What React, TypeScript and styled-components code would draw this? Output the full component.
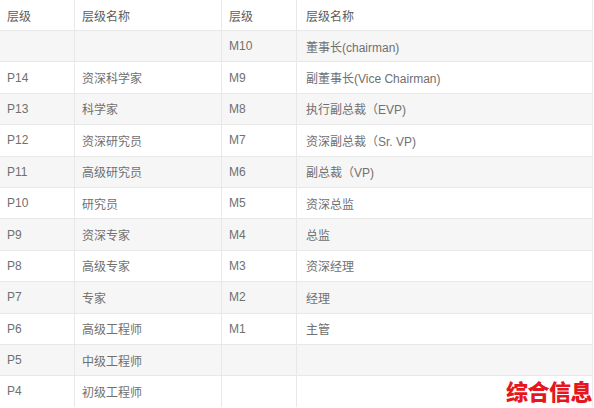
import React from "react"
import styled, { createGlobalStyle } from "styled-components"

const GlobalStyle = createGlobalStyle`
  html, body {
    margin: 0;
    padding: 0;
    background: #ffffff;
  }
  body {
    font-family: "Liberation Sans", "Noto Sans CJK SC", sans-serif;
  }
`

// 左边是专业序列，右边是管理序列
const rows: [string, string, string, string][] = [
  ["", "", "M10", "董事长(chairman)"],
  ["P14", "资深科学家", "M9", "副董事长(Vice Chairman)"],
  ["P13", "科学家", "M8", "执行副总裁（EVP)"],
  ["P12", "资深研究员", "M7", "资深副总裁（Sr. VP)"],
  ["P11", "高级研究员", "M6", "副总裁（VP)"],
  ["P10", "研究员", "M5", "资深总监"],
  ["P9", "资深专家", "M4", "总监"],
  ["P8", "高级专家", "M3", "资深经理"],
  ["P7", "专家", "M2", "经理"],
  ["P6", "高级工程师", "M1", "主管"],
  ["P5", "中级工程师", "", ""],
  ["P4", "初级工程师", "", ""],
]

const App = () => {
  return (
    <>
      <GlobalStyle />
      <Page>
        <Table>
          <Row header>
            <Cell>层级</Cell>
            <Cell>层级名称</Cell>
            <Cell>层级</Cell>
            <Cell>层级名称</Cell>
          </Row>
          {rows.map((r, i) => (
            <Row key={i} striped={i % 2 === 0}>
              {r.map((c, j) => (
                <Cell key={j}>{c}</Cell>
              ))}
            </Row>
          ))}
        </Table>
        <Watermark>综合信息</Watermark>
      </Page>
    </>
  )
}

export default App

interface RowProps {
  header?: boolean
  striped?: boolean
}

const Page = styled.div`
  position: relative;
  width: 594px;
  height: 408px;
  overflow: hidden;
`

const Table = styled.div`
  display: flex;
  flex-direction: column;
  width: 592px;
  border-right: 1px solid #ececec;
`

const Row = styled.div.withConfig({
  shouldForwardProp: (p) => p !== "header" && p !== "striped",
})<RowProps>`
  display: grid;
  grid-template-columns: 75px 147px 75px 1fr;
  box-sizing: border-box;
  height: ${(props) => (props.header ? "30px" : "31.4px")};
  border-top: ${(props) => (props.header ? "none" : "1px solid #e8e8e8")};
  background: ${(props) => (props.striped ? "#f6f6f6" : "#ffffff")};
  color: ${(props) => (props.header ? "#5c5c5c" : "#707070")};
`

const Cell = styled.div`
  display: flex;
  align-items: center;
  box-sizing: border-box;
  padding-left: 7px;
  font-size: 12px;
  white-space: nowrap;
  border-right: 1px solid #e8e8e8;
  &:last-child {
    border-right: none;
    padding-left: 9px;
  }
`

const Watermark = styled.div`
  position: absolute;
  right: 2px;
  bottom: 5px;
  font-family: "Noto Sans CJK SC", sans-serif;
  font-size: 22px;
  font-weight: 900;
  line-height: 26px;
  color: #e5161d;
  letter-spacing: -0.5px;
`
